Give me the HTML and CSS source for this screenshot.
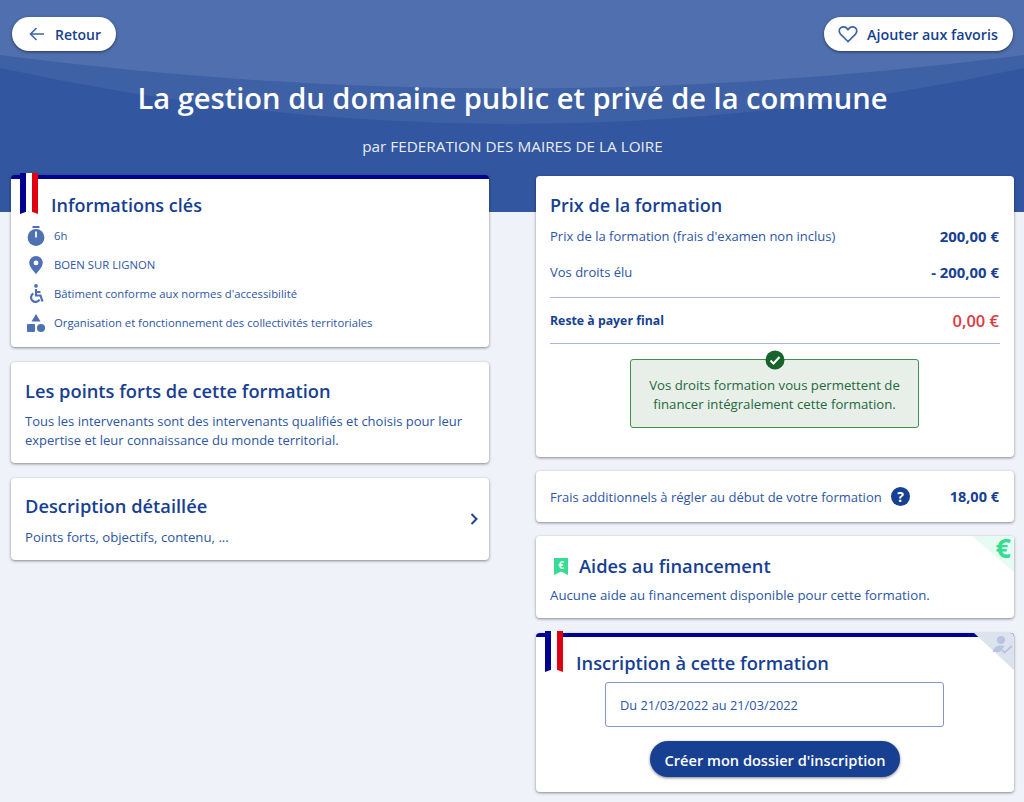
FILE: index.html
```html
<!DOCTYPE html>
<html lang="fr">
<head>
    <meta charset="UTF-8">
    <title>La gestion du domaine public et privé de la commune</title>
    <link rel="stylesheet" href="styles.css">
</head>
<body>
    <svg class="hero-bg" viewBox="0 0 1024 212" preserveAspectRatio="none" aria-hidden="true">
        <rect width="1024" height="212" fill="#32569f"/>
        <path d="M0 68 Q512 180 1024 68 V0 H0 Z" fill="#3e60a5"/>
        <path d="M0 55 Q512 122 1024 55 V0 H0 Z" fill="#506fae"/>
    </svg>

    <div class="page">
        <div class="top-bar">
            <a class="pill-btn pill-back">
                <svg width="18" height="18" viewBox="0 0 18 18" fill="none" stroke="#3f64ab" stroke-width="1.6"><path d="M16 9H2.5M8.5 3 2.5 9l6 6"/></svg>
                Retour
            </a>
            <a class="pill-btn pill-fav">
                <svg width="20" height="18" viewBox="0 0 20 18" fill="none" stroke="#3f64ab" stroke-width="1.7"><path d="M10 16.5 2.7 9.3C.6 7.2.9 4.3 2.6 2.8c1.9-1.6 4.8-1.2 6.3.6L10 4.7l1.1-1.3c1.5-1.8 4.4-2.2 6.3-.6 1.7 1.5 2 4.4-.1 6.5z"/></svg>
                Ajouter aux favoris
            </a>
        </div>

        <h1>La gestion du domaine public et privé de la commune</h1>
        <p class="organizer">par FEDERATION DES MAIRES DE LA LOIRE</p>

        <div class="columns">
            <div class="column column-left">
                <section class="card card-flag card-infos">
                    <span class="ribbon"></span>
                    <h2 class="flag-title">Informations clés</h2>
                    <ul class="info-list">
                        <li>
                            <svg width="18" height="20" viewBox="0 0 18 20" fill="#4f71b3"><rect x="5.5" y="0" width="7" height="2"/><circle cx="9" cy="11.5" r="8.4"/><rect x="8.1" y="5.5" width="1.8" height="6" fill="#fff"/></svg>
                            6h
                        </li>
                        <li>
                            <svg width="18" height="20" viewBox="0 0 18 20" fill="#4f71b3"><path fill-rule="evenodd" d="M9 1a6.8 6.8 0 0 0-6.8 6.8C2.2 12.3 9 19 9 19s6.8-6.7 6.8-11.2A6.8 6.8 0 0 0 9 1zm0 4.5a2.4 2.4 0 1 1 0 4.8 2.4 2.4 0 0 1 0-4.8z"/></svg>
                            BOEN SUR LIGNON
                        </li>
                        <li>
                            <svg width="18" height="20" viewBox="0 0 18 20" fill="none" stroke="#4f71b3" stroke-width="2.2"><circle cx="9" cy="1.9" r="1.9" fill="#4f71b3" stroke="none"/><path d="M9 5v6.5h4.5l2 6M9 8h4.5"/><path d="M6.3 9.5a4.5 4.5 0 1 0 6.2 6"/></svg>
                            Bâtiment conforme aux normes d'accessibilité
                        </li>
                        <li>
                            <svg width="18" height="20" viewBox="0 0 18 20" fill="#4f71b3"><path d="M9 1l4.5 7.5h-9z"/><rect x="0" y="11" width="8" height="8" rx="1"/><circle cx="14" cy="15" r="4"/></svg>
                            Organisation et fonctionnement des collectivités territoriales
                        </li>
                    </ul>
                </section>

                <section class="card card-points">
                    <h2>Les points forts de cette formation</h2>
                    <p>Tous les intervenants sont des intervenants qualifiés et choisis pour leur expertise et leur connaissance du monde territorial.</p>
                </section>

                <section class="card card-desc">
                    <div>
                        <h2>Description détaillée</h2>
                        <p>Points forts, objectifs, contenu, ...</p>
                    </div>
                    <svg class="chevron" width="8" height="12" viewBox="0 0 8 12" fill="none" stroke="#1e4595" stroke-width="2"><path d="M1.5 1l5 5-5 5"/></svg>
                </section>
            </div>

            <div class="column">
                <section class="card card-price">
                    <h2>Prix de la formation</h2>
                    <div class="price-row"><span>Prix de la formation (frais d'examen non inclus)</span><strong>200,00 €</strong></div>
                    <div class="price-row price-rights"><span>Vos droits élu</span><strong>- 200,00 €</strong></div>
                    <div class="price-row price-total"><span>Reste à payer final</span><strong>0,00 €</strong></div>
                    <div class="alert">
                        <svg class="alert-icon" width="20" height="20" viewBox="0 0 20 20"><circle cx="10" cy="10" r="9.5" fill="#18622c"/><path d="M5.5 10.5l3 3 6-6.5" fill="none" stroke="#fff" stroke-width="2"/></svg>
                        Vos droits formation vous permettent de financer intégralement cette formation.
                    </div>
                </section>

                <section class="card card-fees">
                    <span>Frais additionnels à régler au début de votre formation</span>
                    <svg class="help" width="19" height="19" viewBox="0 0 19 19"><circle cx="9.5" cy="9.5" r="9.5" fill="#173f92"/><text x="9.5" y="14.5" text-anchor="middle" class="help-mark">?</text></svg>
                    <strong>18,00 €</strong>
                </section>

                <section class="card card-aid">
                    <span class="corner corner-green"></span>
                    <span class="corner-euro">€</span>
                    <h2>
                        <svg width="14" height="17" viewBox="0 0 14 17"><path d="M0 0h14v17l-7-3.5L0 17z" fill="#35dc91"/><text x="7" y="10.5" text-anchor="middle" class="bookmark-euro">€</text></svg>
                        Aides au financement
                    </h2>
                    <p>Aucune aide au financement disponible pour cette formation.</p>
                </section>

                <section class="card card-flag card-register">
                    <span class="corner corner-grey"></span>
                    <svg class="corner-user" width="20" height="20" viewBox="0 0 20 20" fill="#b9c4de"><circle cx="8" cy="5" r="4"/><path d="M0 17c0-4 3-6.5 8-6.5 1.5 0 2.500.2 3.5.5L7 17z"/><path d="M9 15l2.5 2.5L19 11" fill="none" stroke="#b9c4de" stroke-width="1.8"/></svg>
                    <span class="ribbon"></span>
                    <h2 class="flag-title">Inscription à cette formation</h2>
                    <div class="date-box">Du 21/03/2022 au 21/03/2022</div>
                    <a class="primary-btn">Créer mon dossier d'inscription</a>
                </section>
            </div>
        </div>
    </div>
</body>
</html>
```

FILE: styles.css
```css
:root {
    --navy: #173f92;
    --text: #2c55a5;
    --flag-blue: #000091;
    --flag-red: #e1000f;
    --rule: #a9b9d9;
}

* {
    margin: 0;
    padding: 0;
    box-sizing: border-box;
}

html, body {
    height: 802px;
    overflow: hidden;
}

body {
    position: relative;
    font-family: "Open Sans", sans-serif;
    background-color: #eff2f8;
    color: var(--text);
}

.hero-bg {
    position: absolute;
    top: 0;
    left: 0;
    width: 1024px;
    height: 212px;
}

.page {
    position: relative;
    padding: 17px 10px 0 11px;
}

.top-bar {
    display: flex;
    justify-content: space-between;
    padding-left: 1px;
}

.pill-btn {
    display: flex;
    align-items: center;
    height: 34px;
    border-radius: 17px;
    background: #fff;
    color: var(--navy);
    font-size: 14px;
    font-weight: 600;
    box-shadow: 0 1px 3px rgba(0, 0, 0, 0.5);
}

.pill-back {
    width: 104px;
    padding-left: 16px;
    gap: 9px;
}

.pill-fav {
    width: 189px;
    padding-left: 14px;
    gap: 9px;
    margin-right: 1px;
    font-size: 14.3px;
}

h1 {
    margin-top: 27px;
    text-align: center;
    color: #fff;
    font-size: 29.1px;
    line-height: 40px;
    font-weight: 600;
}

.organizer {
    margin-top: 18px;
    text-align: center;
    color: #e9edf6;
    font-size: 15.3px;
    line-height: 20px;
    font-weight: 500;
}

.columns {
    display: grid;
    grid-template-columns: 478px 478px;
    column-gap: 47px;
    margin-top: 20px;
}

.column {
    display: flex;
    flex-direction: column;
    gap: 14px;
}

.column-left {
    gap: 15px;
}

.card {
    position: relative;
    background: #fff;
    border-radius: 4px;
    box-shadow: 0 1px 3px rgba(0, 0, 0, 0.45);
}

.card h2 {
    color: var(--navy);
    font-size: 18.3px;
    line-height: 24px;
    font-weight: 600;
}

.card p {
    font-size: 13px;
    line-height: 19px;
}

/* ruban tricolore */
.card-flag {
    border-top: 4px solid var(--flag-blue);
}

.ribbon {
    position: absolute;
    top: -6px;
    left: 9px;
    width: 18px;
    height: 41px;
    background: linear-gradient(90deg, var(--flag-blue) 33%, #fff 33%, #fff 66%, var(--flag-red) 66%);
    clip-path: polygon(0 0, 100% 0, 100% 100%, 50% 92%, 0 100%);
}

.flag-title {
    padding-left: 40px;
}

.card-infos {
    height: 172px;
    margin-top: -1px;
    padding-top: 14px;
}

.card-infos h2 {
    font-size: 18px;
}

.info-list {
    list-style: none;
    margin-top: 4px;
    padding-left: 16px;
}

.info-list li {
    display: flex;
    align-items: center;
    gap: 9px;
    height: 29px;
    font-size: 11.3px;
}

.card-points {
    height: 101px;
    padding: 17px 14px 0;
}

.card-points p {
    margin-top: 9px;
}

.card-desc {
    display: flex;
    align-items: center;
    justify-content: space-between;
    height: 82px;
    padding: 2px 11px 0 14px;
}

.card-desc p {
    margin-top: 10px;
    font-size: 13.2px;
}

.chevron {
    margin-top: -2px;
}

.card-price {
    height: 281px;
    padding: 17px 14px 0;
}

.card-price h2 {
    font-size: 18px;
}

.price-row {
    display: flex;
    justify-content: space-between;
    align-items: center;
    height: 36px;
    margin-top: 1px;
    font-size: 13px;
}

.price-row strong {
    margin-right: 1px;
    color: var(--navy);
    font-size: 14.9px;
    font-weight: 700;
}

.price-rights {
    height: 44px;
    margin-top: 0;
    padding-bottom: 8px;
    border-bottom: 1px solid var(--rule);
}

.price-total {
    height: 46px;
    margin-top: 0;
    border-bottom: 1px solid var(--rule);
    color: var(--navy);
    font-size: 12.3px;
    font-weight: 700;
}

.price-total strong {
    color: #e0393e;
    font-size: 16.5px;
    font-weight: 600;
}

.alert {
    position: relative;
    width: 289px;
    height: 69px;
    margin: 15px 0 0 80px;
    padding: 16px 12px 0;
    border: 1px solid #3f8f4f;
    border-radius: 3px;
    background: #e8efe9;
    color: #24693a;
    text-align: center;
    font-size: 13.2px;
    line-height: 19px;
}

.alert-icon {
    position: absolute;
    top: -10px;
    left: 134px;
}

.card-fees {
    display: flex;
    align-items: center;
    height: 51px;
    padding: 0 15px 0 14px;
    font-size: 13px;
}

.help {
    margin-left: 9px;
}

.help-mark {
    fill: #fff;
    font-size: 14px;
    font-weight: 700;
}

.card-fees strong {
    margin-left: auto;
    color: var(--navy);
    font-size: 14.5px;
}

.card-aid {
    height: 82px;
    padding: 18px 14px 0;
}

.card-aid h2 {
    display: flex;
    align-items: center;
    gap: 11px;
    padding-left: 4px;
}

.bookmark-euro {
    fill: #fff;
    font-size: 10px;
    font-weight: 700;
}

.card-aid p {
    margin-top: 8px;
    font-size: 13.25px;
}

.corner {
    position: absolute;
    top: 0;
    right: 0;
    border-top-right-radius: 4px;
}

.corner-green {
    width: 42px;
    height: 36px;
    background: #e6fbf2;
    clip-path: polygon(0 0, 100% 0, 100% 100%);
}

.corner-euro {
    position: absolute;
    top: 0;
    right: 3px;
    color: #35dc91;
    font-size: 27px;
    line-height: 24px;
    font-weight: 700;
}

.card-register {
    height: 159px;
    margin-top: 1px;
    padding-top: 14px;
}

.corner-grey {
    top: -4px;
    width: 40px;
    height: 37px;
    background: #dde2ef;
    clip-path: polygon(0 0, 100% 0, 100% 100%);
}

.corner-user {
    position: absolute;
    top: -2px;
    right: 1px;
}

.date-box {
    display: flex;
    align-items: center;
    width: 339px;
    height: 45px;
    margin: 7px 0 0 69px;
    padding: 1px 0 0 14px;
    border: 1px solid #7f97cb;
    border-radius: 3px;
    font-size: 12.8px;
}

.primary-btn {
    display: flex;
    align-items: center;
    justify-content: center;
    width: 250px;
    height: 36px;
    margin: 14px auto 0;
    padding-top: 1px;
    border-radius: 18px;
    background: var(--navy);
    color: #fff;
    font-size: 14.6px;
    font-weight: 600;
    box-shadow: 0 1px 3px rgba(0, 0, 0, 0.5);
}
```
